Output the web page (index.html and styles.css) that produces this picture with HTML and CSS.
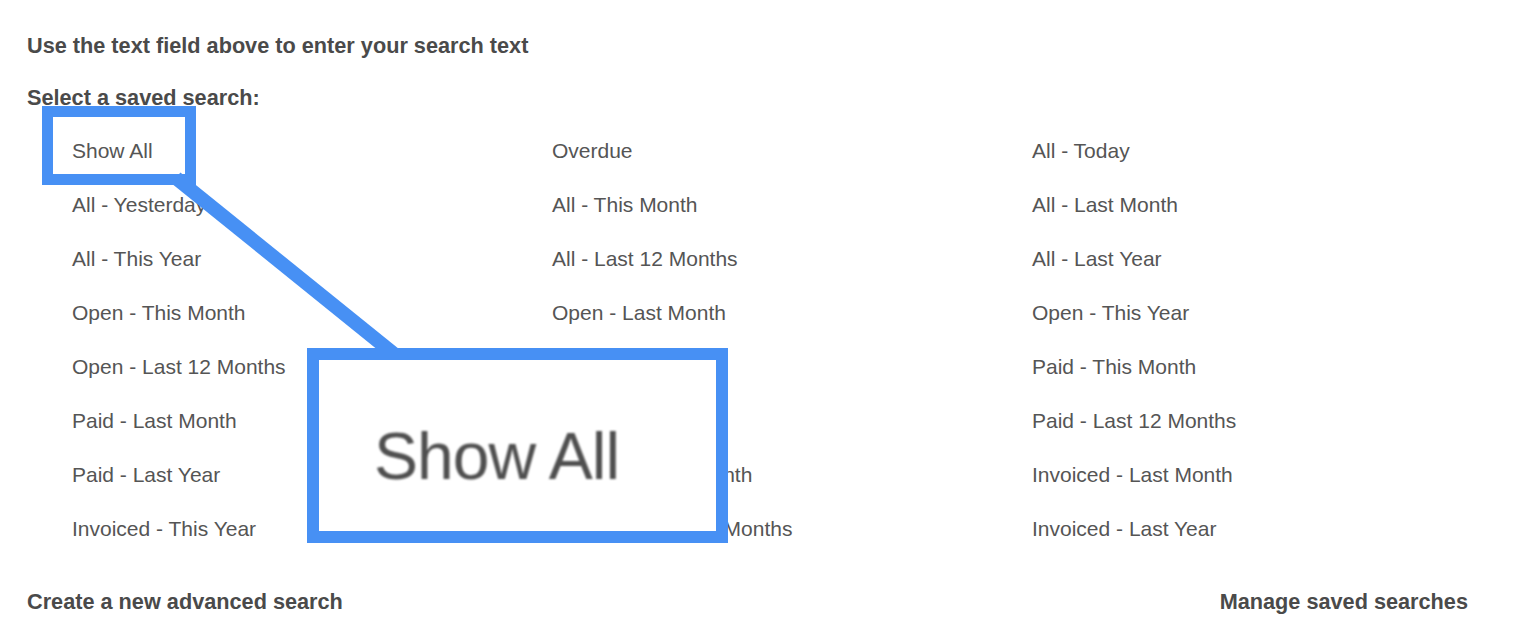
FILE: index.html
```html
<!DOCTYPE html>
<html>
<head>
<meta charset="utf-8">
<link rel="stylesheet" href="styles.css">
</head>
<body>
<div class="page">
  <p class="hint">Use the text field above to enter your search text</p>
  <p class="label">Select a saved search:</p>
  <ul class="grid">
    <li>Show All</li><li>Overdue</li><li>All - Today</li>
    <li>All - Yesterday</li><li>All - This Month</li><li>All - Last Month</li>
    <li>All - This Year</li><li>All - Last 12 Months</li><li>All - Last Year</li>
    <li>Open - This Month</li><li>Open - Last Month</li><li>Open - This Year</li>
    <li>Open - Last 12 Months</li><li>Open - Last Year</li><li>Paid - This Month</li>
    <li>Paid - Last Month</li><li>Paid - This Year</li><li>Paid - Last 12 Months</li>
    <li>Paid - Last Year</li><li>Invoiced - This Month</li><li>Invoiced - Last Month</li>
    <li>Invoiced - This Year</li><li>Invoiced - Last 12 Months</li><li>Invoiced - Last Year</li>
  </ul>
  <div class="footer">
    <span>Create a new advanced search</span>
    <span>Manage saved searches</span>
  </div>
</div>
<svg class="connector" width="1538" height="642" viewBox="0 0 1538 642">
  <line x1="176" y1="178" x2="394" y2="354" stroke="#4790f4" stroke-width="14"/>
</svg>
<div class="callout-small"></div>
<div class="callout-big"><span>Show All</span></div>
</body>
</html>
```
FILE: styles.css
```css
html, body {
  margin: 0;
  padding: 0;
  background: #ffffff;
}
body {
  font-family: "Liberation Sans", Arial, Helvetica, sans-serif;
  color: #555555;
  position: relative;
  width: 1538px;
  height: 642px;
  overflow: hidden;
}
.page {
  padding: 33px 0 0 27px;
  width: 1441px;
}
.hint, .label {
  margin: 0;
  font-size: 21.7px;
  font-weight: bold;
  color: #4a4a4a;
  line-height: 26px;
}
.label {
  margin-top: 26px;
}
.grid {
  list-style: none;
  margin: 0;
  padding: 0;
  display: grid;
  grid-template-columns: 480px 480px 480px;
  margin-top: 27px;
}
.grid li {
  padding-left: 45px;
  font-size: 21px;
  line-height: 26px;
  height: 54px;
  color: #555555;
}
.footer {
  display: flex;
  justify-content: space-between;
  font-size: 21.7px;
  font-weight: bold;
  color: #4a4a4a;
  line-height: 26px;
  margin-top: 19px;
}
.connector {
  position: absolute;
  left: 0;
  top: 0;
}
.callout-small {
  position: absolute;
  left: 42px;
  top: 106px;
  width: 132px;
  height: 57px;
  border: 11px solid #4790f4;
}
.callout-big {
  position: absolute;
  left: 307px;
  top: 348px;
  width: 397px;
  height: 171px;
  border: 12px solid #4790f4;
  background: #ffffff;
  display: flex;
  align-items: center;
  box-sizing: content-box;
}
.callout-big span {
  margin-left: 55px;
  margin-top: 20px;
  font-size: 66px;
  color: #4f4f4f;
  filter: blur(1.2px);
  letter-spacing: -1px;
}
```
